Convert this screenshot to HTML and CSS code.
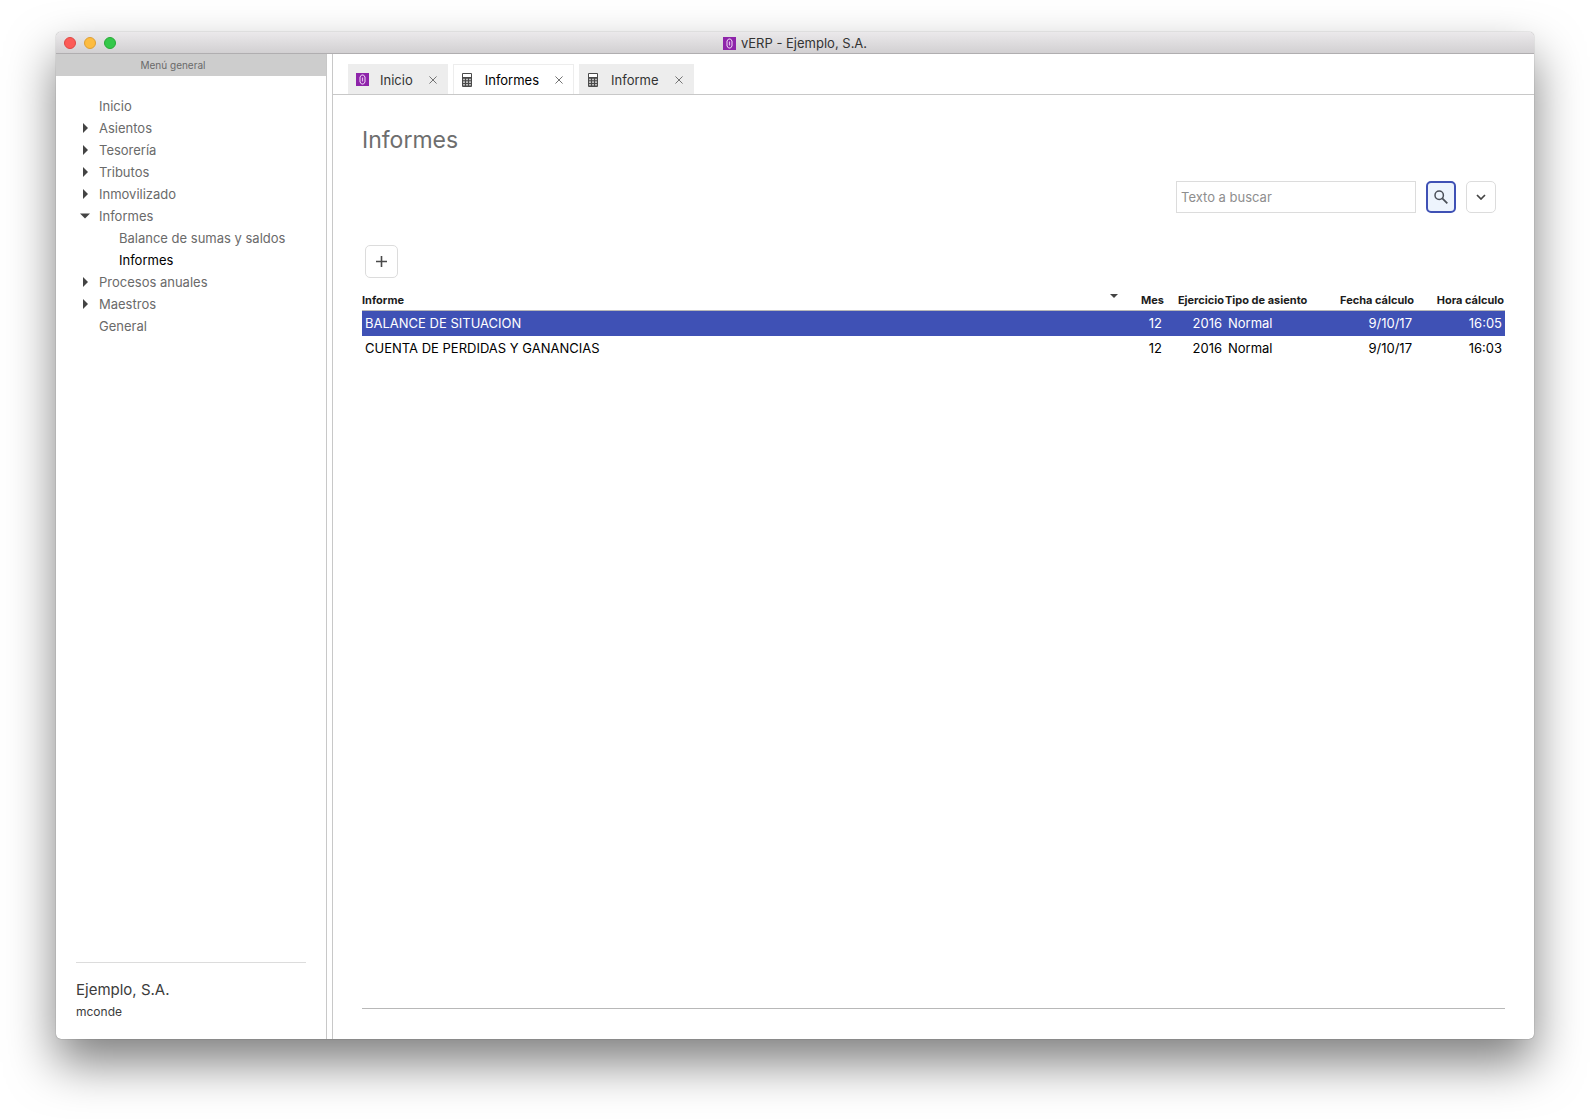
FILE: index.html
```html
<!DOCTYPE html>
<html lang="es">
<head>
<meta charset="utf-8">
<meta name="viewport" content="width=device-width, initial-scale=1">
<title>vERP - Ejemplo, S.A.</title>
<link rel="stylesheet" href="styles.css">
</head>
<body>
<svg class="symbols" aria-hidden="true">
  <symbol id="logo" viewBox="0 0 13 13">
    <rect width="13" height="13" fill="#8e24aa"/>
    <path d="M5.500 2h2L9 4v5l-1.500 2h-2L4 9V4z" fill="none" stroke="#f3dcf8" stroke-width="1"/>
    <path d="M6.500 4.500v4" stroke="#e2b5ec" stroke-width="1.200"/>
  </symbol>
  <symbol id="calc" viewBox="0 0 10 14">
    <rect width="10" height="14" rx="1" fill="#4a4a4a"/>
    <rect x="1" y="1" width="8" height="3" fill="#fff"/>
    <path d="M1.200 5.700h1.600v1.600H1.200zM4.200 5.700h1.600v1.600H4.200zM7.200 5.700h1.600v1.600H7.200zM1.200 8.300h1.600v1.600H1.200zM4.200 8.300h1.600v1.600H4.200zM7.200 8.300h1.600v1.600H7.200zM1.200 11h1.600v1.600H1.200zM4.200 11h1.600v1.600H4.200zM7.200 11h1.600v1.600H7.200z" fill="#ddd"/>
  </symbol>
  <symbol id="close" viewBox="0 0 9 9">
    <path d="M.5.5l8 8M8.500.5l-8 8" fill="none" stroke="#707070" stroke-width="1.100"/>
  </symbol>
  <symbol id="closed" viewBox="0 0 10 10"><path d="M3 0l5 5-5 5z" fill="#444"/></symbol>
  <symbol id="open" viewBox="0 0 10 10"><path d="M0 2.500h10L5 7.500z" fill="#444"/></symbol>
</svg>
<div class="window">
  <header class="titlebar">
    <div class="lights">
      <button class="light red" aria-label="Cerrar"></button>
      <button class="light yellow" aria-label="Minimizar"></button>
      <button class="light green" aria-label="Ampliar"></button>
    </div>
    <div class="caption"><svg class="logo"><use href="#logo"/></svg><span>vERP - Ejemplo, S.A.</span></div>
  </header>
  <div class="workspace">
    <aside class="sidebar">
      <div class="sidebar-title"><span>Menú general</span></div>
      <nav>
        <ul class="menu">
          <li><a href="#"><i class="arrow"></i>Inicio</a></li>
          <li><a href="#"><svg class="arrow"><use href="#closed"/></svg>Asientos</a></li>
          <li><a href="#"><svg class="arrow"><use href="#closed"/></svg>Tesorería</a></li>
          <li><a href="#"><svg class="arrow"><use href="#closed"/></svg>Tributos</a></li>
          <li><a href="#"><svg class="arrow"><use href="#closed"/></svg>Inmovilizado</a></li>
          <li><a href="#"><svg class="arrow"><use href="#open"/></svg>Informes</a>
            <ul class="submenu">
              <li><a href="#">Balance de sumas y saldos</a></li>
              <li><a href="#" class="current">Informes</a></li>
            </ul>
          </li>
          <li><a href="#"><svg class="arrow"><use href="#closed"/></svg>Procesos anuales</a></li>
          <li><a href="#"><svg class="arrow"><use href="#closed"/></svg>Maestros</a></li>
          <li><a href="#"><i class="arrow"></i>General</a></li>
        </ul>
      </nav>
      <footer class="account">
        <div class="company">Ejemplo, S.A.</div>
        <div class="user">mconde</div>
      </footer>
    </aside>
    <main class="main">
      <div class="tabs">
        <div class="tab">
          <button class="tab-name"><svg class="logo"><use href="#logo"/></svg>Inicio</button>
          <button class="tab-close" aria-label="Cerrar Inicio"><svg><use href="#close"/></svg></button>
        </div>
        <div class="tab active">
          <button class="tab-name"><svg class="calc"><use href="#calc"/></svg>Informes</button>
          <button class="tab-close" aria-label="Cerrar Informes"><svg><use href="#close"/></svg></button>
        </div>
        <div class="tab">
          <button class="tab-name"><svg class="calc"><use href="#calc"/></svg>Informe</button>
          <button class="tab-close" aria-label="Cerrar Informe"><svg><use href="#close"/></svg></button>
        </div>
      </div>
      <section class="content">
        <h1>Informes</h1>
        <form class="search">
          <input type="text" placeholder="Texto a buscar" aria-label="Texto a buscar">
          <button type="button" class="btn find" aria-label="Buscar">
            <svg width="14" height="14" viewBox="0 0 14 14"><circle cx="5.200" cy="5.200" r="4.200" fill="none" stroke="#4a4f58" stroke-width="1.500"/><path d="M8.300 8.300l5 5" stroke="#4a4f58" stroke-width="1.800"/></svg>
          </button>
          <button type="button" class="btn more" aria-label="Más opciones">
            <svg width="10" height="6" viewBox="0 0 10 6"><path d="M1 1l4 4 4-4" fill="none" stroke="#444" stroke-width="1.700"/></svg>
          </button>
        </form>
        <button class="btn add" aria-label="Añadir">
          <svg width="11" height="11" viewBox="0 0 11 11"><path d="M5.500 0v11M0 5.500h11" stroke="#4a4a4a" stroke-width="1.600"/></svg>
        </button>
        <table>
          <colgroup><col><col class="c-mes"><col class="c-eje"><col class="c-tipo"><col class="c-fecha"><col class="c-hora"></colgroup>
          <thead>
            <tr>
              <th><div class="sorted">Informe<svg width="8" height="4" viewBox="0 0 8 4"><path d="M0 0h8L4 4z" fill="#444"/></svg></div></th>
              <th class="num">Mes</th><th class="num">Ejercicio</th><th>Tipo de asiento</th><th class="num">Fecha cálculo</th><th class="num">Hora cálculo</th>
            </tr>
          </thead>
          <tbody>
            <tr class="selected"><td>BALANCE DE SITUACION</td><td class="num">12</td><td class="num">2016</td><td>Normal</td><td class="num">9/10/17</td><td class="num">16:05</td></tr>
            <tr><td>CUENTA DE PERDIDAS Y GANANCIAS</td><td class="num">12</td><td class="num">2016</td><td>Normal</td><td class="num">9/10/17</td><td class="num">16:03</td></tr>
          </tbody>
        </table>
      </section>
    </main>
  </div>
</div>
</body>
</html>
```
FILE: styles.css
```css
* { box-sizing: border-box; }
body {
  margin: 0;
  min-height: 100vh;
  padding: 32px 56px 80px;
  display: flex;
  background: #fff;
  font: 13px/22px Inter, "Liberation Sans", sans-serif;
  color: #000;
}
button { font: inherit; color: inherit; background: none; border: 0; padding: 0; }
a { color: inherit; text-decoration: none; }
ul { list-style: none; margin: 0; padding: 0; }
svg { display: block; flex: none; }
.symbols { position: absolute; width: 0; height: 0; }
.logo { width: 13px; height: 13px; }

.window {
  flex: 1;
  min-width: 0;
  display: flex;
  flex-direction: column;
  background: #fff;
  border-radius: 5px;
  box-shadow: 0 0 1px rgba(0, 0, 0, .6), 0 24px 48px rgba(0, 0, 0, .5);
}
.titlebar {
  display: grid;
  grid-template-columns: 1fr auto 1fr;
  align-items: center;
  height: 22px;
  padding: 0 8px;
  background: linear-gradient(#ebe9eb, #d2d0d2);
  border-bottom: 1px solid #b0aeb0;
  border-radius: 5px 5px 0 0;
}
.lights { display: flex; gap: 8px; }
.light { width: 12px; height: 12px; border-radius: 50%; border: 1px solid; }
.red { background: #fc5b57; border-color: #df4744; }
.yellow { background: #fdbc40; border-color: #de9f34; }
.green { background: #34c84a; border-color: #27aa35; }
.caption { display: flex; align-items: center; gap: 5px; color: #333; }

.workspace { flex: 1; display: flex; }
.sidebar {
  flex: none;
  width: 271px;
  display: flex;
  flex-direction: column;
  border-right: 1px solid #c8c8c8;
  color: #6a6a6a;
}
.sidebar-title {
  height: 22px;
  padding-right: 36px;
  background: #cdcdcd;
  text-align: center;
  font-size: 10px;
}
.menu { padding: 19px 0 0 24px; }
.menu a { display: flex; align-items: center; gap: 9px; }
.arrow { width: 10px; height: 10px; }
.submenu { padding-left: 39px; }
.current { color: #000; }
.account {
  margin: auto 20px 0 20px;
  padding: 16px 0;
  border-top: 1px solid #dcdcdc;
  color: #3c3c3c;
}
.company { font-size: 15px; }
.user { font-size: 12px; }

.main {
  flex: 1;
  min-width: 0;
  margin-left: 5px;
  display: flex;
  flex-direction: column;
  border-left: 1px solid #c8c8c8;
}
.tabs {
  display: flex;
  gap: 5px;
  padding: 10px 15px 0;
  border-bottom: 1px solid #c8c8c8;
}
.tab {
  display: flex;
  align-items: center;
  gap: 16px;
  height: 30px;
  padding: 0 10px 0 7px;
  border: 1px solid #ededed;
  border-bottom: 0;
  background: #ededed;
  color: #333;
}
.tab.active { background: #fff; color: #000; }
.tab-name { display: flex; align-items: center; gap: 11px; }
.tab-close svg { width: 8px; height: 8px; }
.calc { width: 10px; height: 14px; margin: 0 2px 0 1px; }

.content {
  flex: 1;
  display: flex;
  flex-direction: column;
  margin: 0 29px 30px;
  border-bottom: 1px solid #b8b8b8;
}
h1 { margin: 28px 0 24px; font-size: 23px; line-height: 34px; font-weight: 400; color: #6e6e6e; }
.search { display: flex; justify-content: flex-end; gap: 10px; padding-right: 9px; }
.search input {
  width: 240px;
  height: 32px;
  padding: 0 4px;
  border: 1px solid #dcdcdc;
  font: inherit;
}
.search input::placeholder { color: #8e8e8e; opacity: 1; }
.btn {
  display: flex;
  align-items: center;
  justify-content: center;
  width: 30px;
  height: 32px;
  border: 1px solid #dcdcdc;
  border-radius: 5px;
  background: #fff;
}
.find { border: 2px solid #3f51b5; background: #edf4fd; }
.add { width: 33px; height: 33px; margin: 32px 0 12px 3px; padding: 0 1px 1px 0; }

table { width: 100%; border-collapse: separate; border-spacing: 0; table-layout: fixed; }
.c-mes { width: 41px; }
.c-eje { width: 60px; }
.c-tipo { width: 100px; }
.c-fecha { width: 90px; }
.c-hora { width: 90px; }
th {
  height: 21px;
  padding: 1px 1px 0 0;
  border-bottom: 1px solid #b8b8b8;
  font-size: 11px;
  line-height: 19px;
  font-weight: 700;
  text-align: left;
  white-space: nowrap;
  color: #1c1c1c;
}
td { height: 25px; padding: 0 3px 2px; white-space: nowrap; }
.num { text-align: right; }
.sorted { display: flex; justify-content: space-between; padding-right: 5px; }
.sorted svg { margin-top: 3px; }
.selected { background: #3f51b5; color: #fff; }
```
